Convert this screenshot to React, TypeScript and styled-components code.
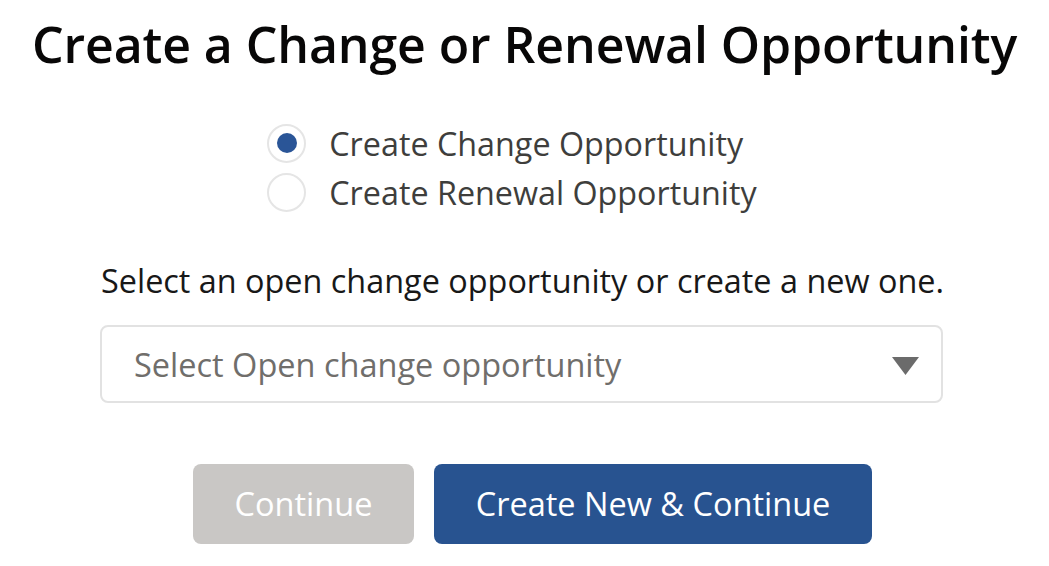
import styled, { createGlobalStyle } from 'styled-components';

const GlobalStyle = createGlobalStyle`
  html, body {
    margin: 0;
    padding: 0;
    background: #ffffff;
  }
  body {
    font-family: "Open Sans", "Liberation Sans", sans-serif;
    -webkit-font-smoothing: antialiased;
  }
`;

const Page = styled.div`
  width: 1049px;
  height: 566px;
  display: flex;
  flex-direction: column;
  align-items: center;
  box-sizing: border-box;
  padding-top: 14px;
`;

const Title = styled.h1`
  margin: 0;
  font-size: 50px;
  font-weight: 600;
  line-height: 60px;
  color: #080707;
  letter-spacing: -0.1px;
`;

const RadioGroup = styled.div`
  display: flex;
  flex-direction: column;
  gap: 9px;
  margin-top: 49px;
  margin-right: 25px;
`;

const RadioRow = styled.label`
  display: flex;
  align-items: center;
  gap: 23px;
  height: 40px;
`;

const RadioCircle = styled.span<{ $checked: boolean }>`
  width: 39px;
  height: 39px;
  box-sizing: border-box;
  border: 2px solid #e5e5e5;
  border-radius: 50%;
  background: #fff;
  display: flex;
  align-items: center;
  justify-content: center;

  &::after {
    content: '';
    width: 20px;
    height: 20px;
    border-radius: 50%;
    background: #2a5597;
    display: ${({ $checked }) => ($checked ? 'block' : 'none')};
  }
`;

const RadioText = styled.span`
  font-size: 32.3px;
  color: #3e3e3c;
`;

const FieldLabel = styled.div`
  margin-top: 48px;
  margin-right: 4px;
  font-size: 32.4px;
  color: #181818;
  line-height: 40px;
`;

const SelectBox = styled.div`
  margin-top: 25px;
  margin-right: 6px;
  width: 843px;
  height: 78px;
  box-sizing: border-box;
  border: 2px solid #e2e2e2;
  border-radius: 8px;
  display: flex;
  align-items: center;
  justify-content: space-between;
  padding: 0 22px 0 32px;
`;

const Placeholder = styled.span`
  font-size: 32.5px;
  color: #706e6b;
`;

const Caret = styled.svg`
  width: 27px;
  height: 18px;
  margin-top: 4px;
`;

const ButtonRow = styled.div`
  display: flex;
  gap: 20px;
  margin-top: 61px;
  margin-left: 16px;
`;

const Button = styled.button<{ $variant: 'disabled' | 'brand' }>`
  height: 80px;
  border: none;
  border-radius: 8px;
  font-family: inherit;
  font-size: 32.5px;
  color: #ffffff;
  padding: 0 0 2px;
  background: ${({ $variant }) => ($variant === 'brand' ? '#285390' : '#c9c7c5')};
  width: ${({ $variant }) => ($variant === 'brand' ? '438px' : '221px')};
`;

export default function App() {
  return (
    <>
      <GlobalStyle />
      <Page>
        <Title>Create a Change or Renewal Opportunity</Title>
        <RadioGroup>
          <RadioRow>
            <RadioCircle $checked />
            <RadioText>Create Change Opportunity</RadioText>
          </RadioRow>
          <RadioRow>
            <RadioCircle $checked={false} />
            <RadioText>Create Renewal Opportunity</RadioText>
          </RadioRow>
        </RadioGroup>
        <FieldLabel>Select an open change opportunity or create a new one.</FieldLabel>
        <SelectBox>
          <Placeholder>Select Open change opportunity</Placeholder>
          <Caret viewBox="0 0 27 18">
            <path d="M0 0 H27 L13.5 18 Z" fill="#6b6b6b" />
          </Caret>
        </SelectBox>
        <ButtonRow>
          <Button $variant="disabled">Continue</Button>
          <Button $variant="brand">Create New &amp; Continue</Button>
        </ButtonRow>
      </Page>
    </>
  );
}
